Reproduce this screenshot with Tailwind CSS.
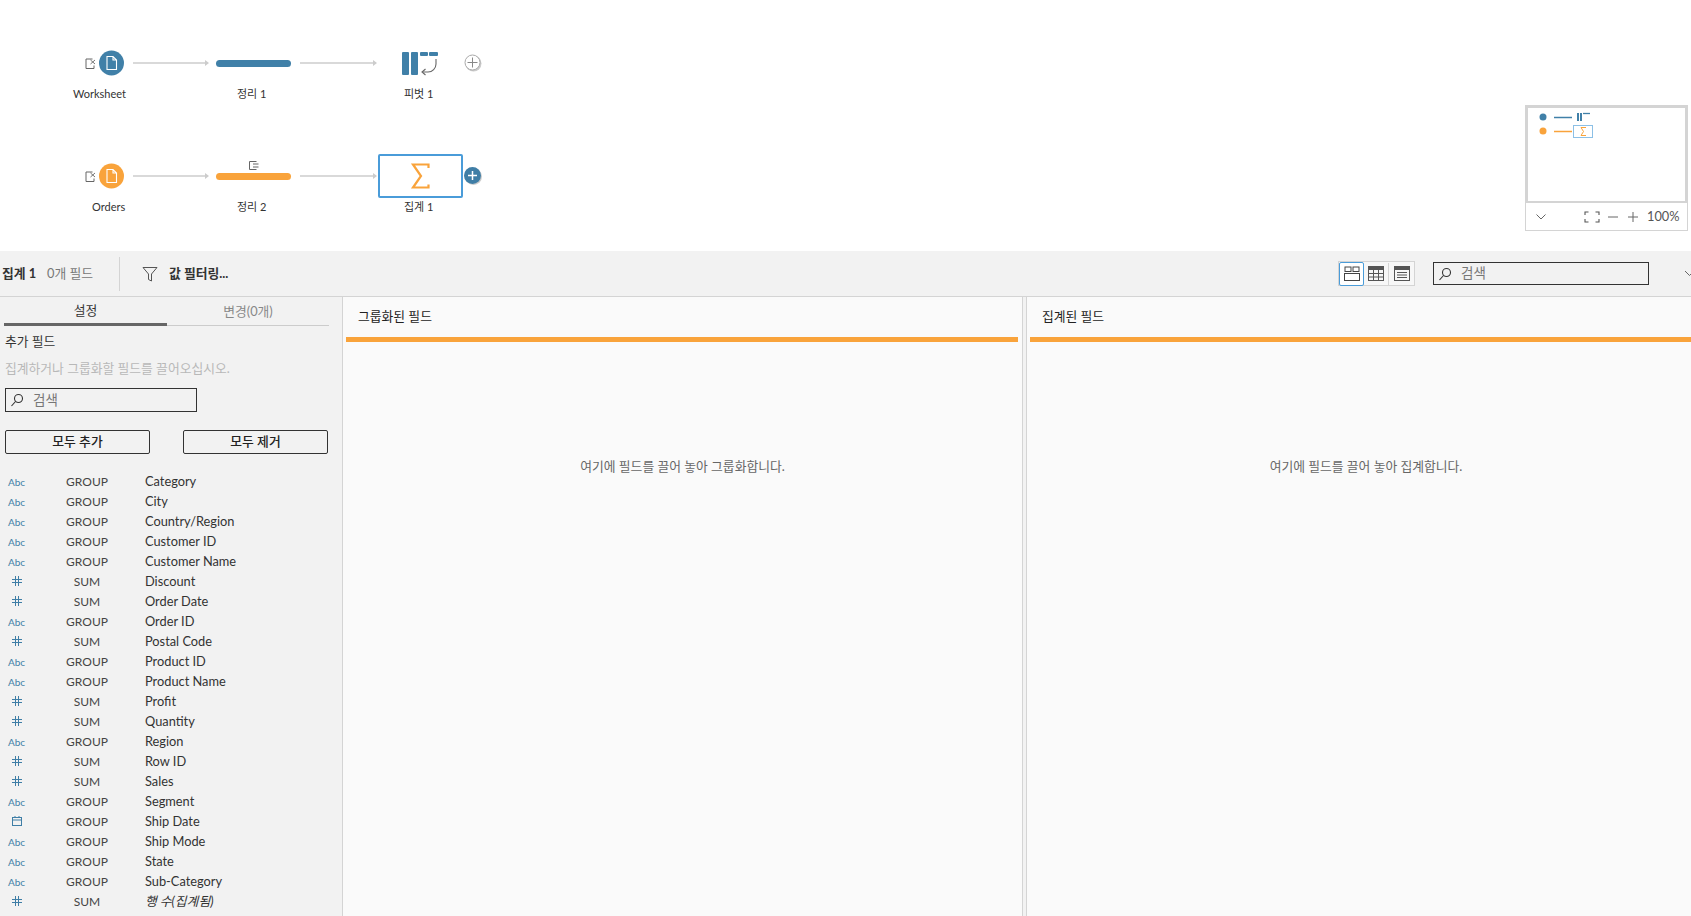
<!DOCTYPE html>
<html lang="ko">
<head>
<meta charset="utf-8">
<title>집계 1</title>
<script src="https://cdn.jsdelivr.net/npm/@tailwindcss/browser@4"></script>
</head>
<body class="m-0 bg-white">
<div class="w-[1691px] h-[916px] overflow-hidden flex flex-col font-['Lato','Noto_Sans_CJK_KR',sans-serif] text-[12.8px] text-[#333]">

  <!-- flow canvas -->
  <div class="relative h-[251px] shrink-0 bg-white">
    <svg class="absolute left-0 top-0" width="500" height="251" fill="none">
      <!-- row 1 -->
      <g stroke="#666" stroke-width="1"><path d="M92.500 59h-6.500v9.500h8v-3"/><path d="M90.500 60l4.500 4M95 60l-4.500 4" stroke-width="0.9"/></g>
      <circle cx="111.500" cy="63" r="12.500" fill="#4080a8"/>
      <path d="M107 56.500h6l3.500 3.500v9.500h-9.500zM113 56.500v3.500h3.500" stroke="#fff" stroke-width="1.100"/>
      <g stroke="#ccc" stroke-width="1.500"><path d="M133 63h74"/><path d="M300 63h75"/></g>
      <path d="M205 60l4 3-4 3zM373 60l4 3-4 3z" fill="#ccc"/>
      <rect x="216" y="60" width="75" height="7" rx="3.500" fill="#4080a8"/>
      <rect x="402" y="52" width="7" height="23" rx="1" fill="#4080a8"/>
      <rect x="411" y="52" width="7" height="23" rx="1" fill="#4080a8"/>
      <rect x="420" y="52" width="8" height="4" rx="1" fill="#4080a8"/>
      <rect x="429" y="52" width="9" height="4" rx="1" fill="#4080a8"/>
      <path d="M436 59v5a8 8 0 0 1-8 8h-5.500" stroke="#666" stroke-width="1.100"/>
      <path d="M425.500 69l-3.500 3 3.500 3" stroke="#666" stroke-width="1.100"/>
      <circle cx="473.500" cy="63.500" r="8" fill="#ccc"/>
      <circle cx="472.500" cy="62.500" r="7.500" fill="#fff" stroke="#aaa" stroke-width="1"/>
      <path d="M472.500 57.500v10M467.500 62.500h10" stroke="#888"/>
      <!-- row 2 -->
      <g stroke="#666" stroke-width="1"><path d="M92.500 172h-6.500v9.500h8v-3"/><path d="M90.500 173l4.500 4M95 173l-4.500 4" stroke-width="0.9"/></g>
      <circle cx="111.500" cy="176" r="12.500" fill="#f9a33b"/>
      <path d="M107 169.500h6l3.500 3.500v9.500h-9.500zM113 169.500v3.500h3.500" stroke="#fff" stroke-width="1.100"/>
      <g stroke="#ccc" stroke-width="1.500"><path d="M133 176h74"/><path d="M300 176h75"/></g>
      <path d="M205 173l4 3-4 3zM373 173l4 3-4 3z" fill="#ccc"/>
      <rect x="216" y="173" width="75" height="7" rx="3.500" fill="#f9a33b"/>
      <path d="M256.500 161.500h-7v8h7M253 164h5.500M253 167h5.500" stroke="#666" stroke-width="1"/>
      <rect x="379" y="155" width="83" height="42" rx="1" fill="#fff" stroke="#4a9cd9" stroke-width="2"/>
      <path d="M428.500 168v-3.500h-15.500l8 11.500-8 11.500h15.500v-3" stroke="#f9a33b" stroke-width="2.200"/>
      <circle cx="473.500" cy="176.500" r="8.500" fill="#ccc"/>
      <circle cx="472.500" cy="175.500" r="8.500" fill="#3f7ea6"/>
      <path d="M472.500 171v9M468 175.500h9" stroke="#fff" stroke-width="1.500"/>
    </svg>
    <span class="absolute left-[73px] top-[87px] text-[11px] leading-[14px]">Worksheet</span>
    <span class="absolute left-[237px] top-[87px] text-[11px] leading-[14px]">정리 1</span>
    <span class="absolute left-[404px] top-[87px] text-[11px] leading-[14px]">피벗 1</span>
    <span class="absolute left-[92px] top-[200px] text-[11px] leading-[14px]">Orders</span>
    <span class="absolute left-[237px] top-[200px] text-[11px] leading-[14px]">정리 2</span>
    <span class="absolute left-[404px] top-[200px] text-[11px] leading-[14px]">집계 1</span>

    <!-- minimap -->
    <div class="absolute left-[1525px] top-[105px] w-[163px] h-[126px] border border-[#d4d4d4] flex flex-col bg-white">
      <div class="relative h-[97px] border-2 border-[#d4d4d4]">
        <svg class="absolute left-0 top-0" width="100" height="40" fill="none">
          <circle cx="15" cy="9" r="3.500" fill="#4080a8"/>
          <path d="M26 9.500h18" stroke="#4080a8" stroke-width="1.500"/>
          <path d="M49 5h2v8h-2zM52 5h2v8h-2z" fill="#4080a8"/>
          <path d="M55 5.500h7" stroke="#4080a8" stroke-width="1.300"/>
          <circle cx="15" cy="23" r="3.500" fill="#f9a33b"/>
          <path d="M26 23.500h18" stroke="#f9a33b" stroke-width="1.500"/>
          <rect x="45.500" y="17.500" width="19" height="12" fill="#fff" stroke="#8cc0e6"/>
          <path d="M58 19.500h-5l2.500 4-2.500 4h5" stroke="#f9a33b"/>
        </svg>
      </div>
      <div class="flex-1 flex items-center pl-[9px] text-[#555]">
        <svg width="12" height="8" fill="none" stroke="#666"><path d="M1.500 1.500l4.500 4.500 4.500-4.500"/></svg>
        <svg class="ml-[37px]" width="16" height="12" fill="none" stroke="#555" stroke-width="1.100"><path d="M1 4V1h3.500M11.500 1h3.500v3M15 8v3h-3.500M4.500 11H1V8"/></svg>
        <svg class="ml-[6px]" width="14" height="10" fill="none" stroke="#666"><path d="M2 5h10"/></svg>
        <svg class="ml-[6px]" width="14" height="12" fill="none" stroke="#666"><path d="M2 6h10M7 1v10"/></svg>
        <span class="ml-[7px] text-[#555]">100%</span>
      </div>
    </div>
  </div>

  <!-- toolbar -->
  <div class="h-[46px] shrink-0 bg-[#f2f2f2] border-b border-[#d4d4d4] flex items-center">
    <span class="ml-[2px] w-[45px] font-bold">집계 1</span>
    <span class="text-[#777]">0개 필드</span>
    <div class="ml-[26px] w-px h-[34px] bg-[#d4d4d4]"></div>
    <svg class="ml-[22px]" width="16" height="16" fill="none" stroke="#555"><path d="M1 1.500h14l-5.500 6.500v7l-3-1.500v-5.500z"/></svg>
    <span class="ml-[11px] font-bold">값 필터링...</span>
    <div class="ml-auto flex items-center h-[25px] w-[77px] border border-[#d4d4d4] bg-[#f7f7f7] mr-[18px] box-border">
      <div class="w-[25px] h-[24px] border border-[#4a9cd9] rounded-[2px] flex items-center justify-center bg-white">
        <svg width="16" height="15" fill="none" stroke="#444"><rect x="1" y="1" width="6" height="4.500"/><rect x="9" y="1" width="6" height="4.500"/><rect x="0.500" y="7.500" width="15" height="7"/></svg>
      </div>
      <div class="w-[24px] flex items-center justify-center">
        <svg width="16" height="15" fill="none" stroke="#555"><rect x="0.500" y="0.500" width="15" height="14"/><path d="M0 2.500h16" stroke-width="3"/><path d="M0 7.500h16M0 11h16M5.500 4v11M10.500 4v11"/></svg>
      </div>
      <div class="w-px h-[22px] bg-[#d4d4d4]"></div>
      <div class="flex-1 flex items-center justify-center">
        <svg width="16" height="15" fill="none" stroke="#555"><rect x="0.500" y="0.500" width="15" height="14"/><path d="M0 2.500h16" stroke-width="3"/><path d="M3 6.500h10M3 9h10M3 11.500h10"/></svg>
      </div>
    </div>
    <div class="w-[216px] h-[23px] border border-[#333] flex items-center pl-[4px] mr-[35px]">
      <svg width="14" height="14" fill="none" stroke="#333" stroke-width="1.100"><circle cx="8.500" cy="5.500" r="4"/><path d="M5.500 8.500l-4 4.500"/></svg>
      <span class="ml-[9px] text-[13.5px] text-[#777]">검색</span>
    </div>
    <svg class="mr-[-3px]" width="10" height="7" fill="none" stroke="#666"><path d="M1 1l4.500 4.500L10 1"/></svg>
  </div>

  <!-- body -->
  <div class="flex-1 flex min-h-0 bg-[#f2f2f2]">
    <!-- left panel -->
    <aside class="w-[342px] shrink-0 flex flex-col">
      <div class="ml-[4px] w-[325px] h-[29px] flex border-b border-[#ccc]">
        <div class="w-[163px] h-[29px] border-b-[3px] border-[#666] text-center leading-[26px]">설정</div>
        <div class="flex-1 text-center text-[#888] leading-[28px]">변경(0개)</div>
      </div>
      <div class="ml-[5px] mt-[6px] leading-[18px]">추가 필드</div>
      <div class="ml-[5px] mt-[9px] leading-[18px] text-[#b8b8b8]">집계하거나 그룹화할 필드를 끌어오십시오.</div>
      <div class="ml-[5px] mt-[11px] w-[192px] h-[24px] border border-[#333] flex items-center pl-[4px]">
        <svg width="14" height="14" fill="none" stroke="#333" stroke-width="1.100"><circle cx="8.500" cy="5.500" r="4"/><path d="M5.500 8.500l-4 4.500"/></svg>
        <span class="ml-[9px] text-[13.5px] text-[#777]">검색</span>
      </div>
      <div class="ml-[5px] mt-[18px] flex gap-[33px] w-[323px]">
        <button class="w-[145px] h-[24px] border border-[#333] rounded-[2px] font-medium text-[#222]">모두 추가</button>
        <button class="w-[145px] h-[24px] border border-[#333] rounded-[2px] font-medium text-[#222]">모두 제거</button>
      </div>
      <div class="mt-[18px] grid grid-cols-[33px_108px_1fr] auto-rows-[20px] items-center">
        <span class="text-center text-[10px] text-[#3f7ea6]">Abc</span><span class="text-center text-[12px] text-[#444]">GROUP</span><span class="pl-[4px]">Category</span>
        <span class="text-center text-[10px] text-[#3f7ea6]">Abc</span><span class="text-center text-[12px] text-[#444]">GROUP</span><span class="pl-[4px]">City</span>
        <span class="text-center text-[10px] text-[#3f7ea6]">Abc</span><span class="text-center text-[12px] text-[#444]">GROUP</span><span class="pl-[4px]">Country/Region</span>
        <span class="text-center text-[10px] text-[#3f7ea6]">Abc</span><span class="text-center text-[12px] text-[#444]">GROUP</span><span class="pl-[4px]">Customer ID</span>
        <span class="text-center text-[10px] text-[#3f7ea6]">Abc</span><span class="text-center text-[12px] text-[#444]">GROUP</span><span class="pl-[4px]">Customer Name</span>
        <svg class="justify-self-center mb-[2px]" width="10" height="10" fill="none" stroke="#3f7ea6"><path d="M3.500 0v10M6.500 0v10M0 3.500h10M0 6.500h10"/></svg><span class="text-center text-[12px] text-[#444]">SUM</span><span class="pl-[4px]">Discount</span>
        <svg class="justify-self-center mb-[2px]" width="10" height="10" fill="none" stroke="#3f7ea6"><path d="M3.500 0v10M6.500 0v10M0 3.500h10M0 6.500h10"/></svg><span class="text-center text-[12px] text-[#444]">SUM</span><span class="pl-[4px]">Order Date</span>
        <span class="text-center text-[10px] text-[#3f7ea6]">Abc</span><span class="text-center text-[12px] text-[#444]">GROUP</span><span class="pl-[4px]">Order ID</span>
        <svg class="justify-self-center mb-[2px]" width="10" height="10" fill="none" stroke="#3f7ea6"><path d="M3.500 0v10M6.500 0v10M0 3.500h10M0 6.500h10"/></svg><span class="text-center text-[12px] text-[#444]">SUM</span><span class="pl-[4px]">Postal Code</span>
        <span class="text-center text-[10px] text-[#3f7ea6]">Abc</span><span class="text-center text-[12px] text-[#444]">GROUP</span><span class="pl-[4px]">Product ID</span>
        <span class="text-center text-[10px] text-[#3f7ea6]">Abc</span><span class="text-center text-[12px] text-[#444]">GROUP</span><span class="pl-[4px]">Product Name</span>
        <svg class="justify-self-center mb-[2px]" width="10" height="10" fill="none" stroke="#3f7ea6"><path d="M3.500 0v10M6.500 0v10M0 3.500h10M0 6.500h10"/></svg><span class="text-center text-[12px] text-[#444]">SUM</span><span class="pl-[4px]">Profit</span>
        <svg class="justify-self-center mb-[2px]" width="10" height="10" fill="none" stroke="#3f7ea6"><path d="M3.500 0v10M6.500 0v10M0 3.500h10M0 6.500h10"/></svg><span class="text-center text-[12px] text-[#444]">SUM</span><span class="pl-[4px]">Quantity</span>
        <span class="text-center text-[10px] text-[#3f7ea6]">Abc</span><span class="text-center text-[12px] text-[#444]">GROUP</span><span class="pl-[4px]">Region</span>
        <svg class="justify-self-center mb-[2px]" width="10" height="10" fill="none" stroke="#3f7ea6"><path d="M3.500 0v10M6.500 0v10M0 3.500h10M0 6.500h10"/></svg><span class="text-center text-[12px] text-[#444]">SUM</span><span class="pl-[4px]">Row ID</span>
        <svg class="justify-self-center mb-[2px]" width="10" height="10" fill="none" stroke="#3f7ea6"><path d="M3.500 0v10M6.500 0v10M0 3.500h10M0 6.500h10"/></svg><span class="text-center text-[12px] text-[#444]">SUM</span><span class="pl-[4px]">Sales</span>
        <span class="text-center text-[10px] text-[#3f7ea6]">Abc</span><span class="text-center text-[12px] text-[#444]">GROUP</span><span class="pl-[4px]">Segment</span>
        <svg class="justify-self-center mb-[2px]" width="10" height="10" fill="none" stroke="#3f7ea6"><rect x="0.500" y="1.500" width="9" height="8"/><path d="M0 4h10M3 0v2M7 0v2"/></svg><span class="text-center text-[12px] text-[#444]">GROUP</span><span class="pl-[4px]">Ship Date</span>
        <span class="text-center text-[10px] text-[#3f7ea6]">Abc</span><span class="text-center text-[12px] text-[#444]">GROUP</span><span class="pl-[4px]">Ship Mode</span>
        <span class="text-center text-[10px] text-[#3f7ea6]">Abc</span><span class="text-center text-[12px] text-[#444]">GROUP</span><span class="pl-[4px]">State</span>
        <span class="text-center text-[10px] text-[#3f7ea6]">Abc</span><span class="text-center text-[12px] text-[#444]">GROUP</span><span class="pl-[4px]">Sub-Category</span>
        <svg class="justify-self-center mb-[2px]" width="10" height="10" fill="none" stroke="#3f7ea6"><path d="M3.500 0v10M6.500 0v10M0 3.500h10M0 6.500h10"/></svg><span class="text-center text-[12px] text-[#444]">SUM</span><span class="pl-[4px] italic">행 수(집계됨)</span>
      </div>
    </aside>

    <!-- panes -->
    <section class="w-[681px] shrink-0 bg-[#fafafa] border-l border-r border-[#d4d4d4] flex flex-col">
      <div class="h-[40px] pl-[15px] flex items-center text-[#222]">그룹화된 필드</div>
      <div class="ml-[3px] mr-[4px] h-[5px] bg-[#f9a33b]"></div>
      <div class="mt-[115px] text-center text-[#666]">여기에 필드를 끌어 놓아 그룹화합니다.</div>
    </section>
    <div class="w-[3px] shrink-0"></div>
    <section class="flex-1 bg-[#fafafa] border-l border-[#d4d4d4] flex flex-col">
      <div class="h-[40px] pl-[15px] flex items-center text-[#222]">집계된 필드</div>
      <div class="ml-[3px] h-[5px] bg-[#f9a33b]"></div>
      <div class="mt-[115px] pl-[14px] text-center text-[#666]">여기에 필드를 끌어 놓아 집계합니다.</div>
    </section>
  </div>
</div>
</body>
</html>
